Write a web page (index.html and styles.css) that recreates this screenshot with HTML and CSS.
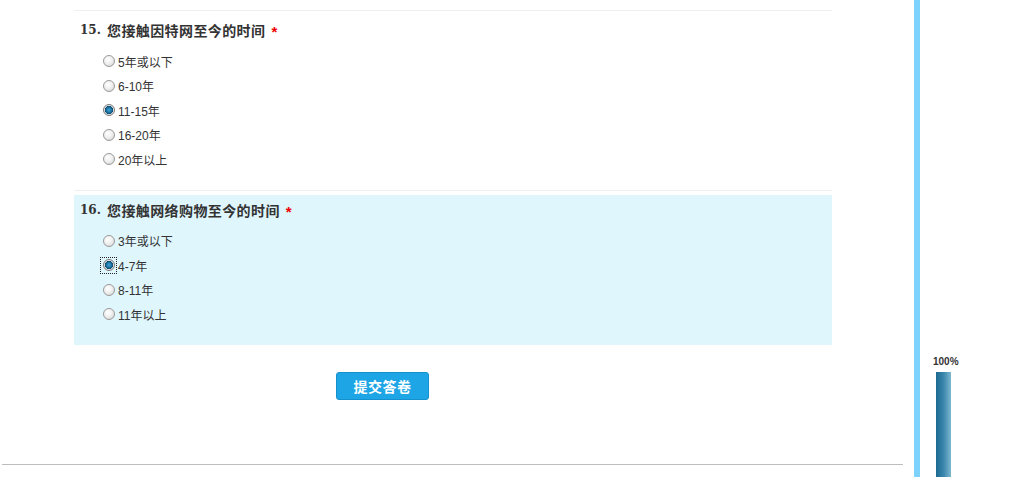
FILE: index.html
```html
<!DOCTYPE html>
<html lang="zh-CN">
<head>
<meta charset="utf-8">
<title>问卷</title>
<link rel="stylesheet" href="styles.css">
</head>
<body>
<div class="page">
  <div class="main">
    <div class="survey">
      <div class="prev-end"></div>
      <div class="question">
        <div class="q-title"><span class="q-num">15.</span><span class="q-text">您接触因特网至今的时间</span><span class="req">*</span></div>
        <ul class="options">
          <li><label><span class="radio-wrap"><input type="radio" name="q15" class="radio"></span><span>5年或以下</span></label></li>
          <li><label><span class="radio-wrap"><input type="radio" name="q15" class="radio"></span><span>6-10年</span></label></li>
          <li><label><span class="radio-wrap"><input type="radio" name="q15" class="radio" checked></span><span>11-15年</span></label></li>
          <li><label><span class="radio-wrap"><input type="radio" name="q15" class="radio"></span><span>16-20年</span></label></li>
          <li><label><span class="radio-wrap"><input type="radio" name="q15" class="radio"></span><span>20年以上</span></label></li>
        </ul>
      </div>
      <div class="question active">
        <div class="q-title"><span class="q-num">16.</span><span class="q-text">您接触网络购物至今的时间</span><span class="req">*</span></div>
        <ul class="options">
          <li><label><span class="radio-wrap"><input type="radio" name="q16" class="radio"></span><span>3年或以下</span></label></li>
          <li><label><span class="radio-wrap focused"><input type="radio" name="q16" class="radio" checked></span><span>4-7年</span></label></li>
          <li><label><span class="radio-wrap"><input type="radio" name="q16" class="radio"></span><span>8-11年</span></label></li>
          <li><label><span class="radio-wrap"><input type="radio" name="q16" class="radio"></span><span>11年以上</span></label></li>
        </ul>
      </div>
    </div>
    <div class="submit-row">
      <button class="submit" type="button">提交答卷</button>
    </div>
    <div class="footer-line"></div>
  </div>
  <div class="side">
    <div class="side-bar"></div>
    <div class="progress">
      <div class="progress-label">100%</div>
      <div class="progress-fill"></div>
    </div>
  </div>
</div>
</body>
</html>
```
FILE: styles.css
```css
html, body {
  margin: 0;
  padding: 0;
  background: #fff;
  height: 100%;
  overflow: hidden;
}
body {
  font-family: "Liberation Sans", "Noto Sans CJK SC", sans-serif;
  color: #333;
}
.page {
  display: flex;
  height: 477px;
}
.main {
  width: 904px;
  display: flex;
  flex-direction: column;
}
.survey {
  margin-left: 74px;
  width: 758px;
}
.prev-end {
  height: 10px;
  border-bottom: 1px solid #efefef;
  margin-bottom: 4px;
}
.question {
  padding: 5px 6px 18px 6px;
  border-bottom: 1px solid #efefef;
  margin-bottom: 4px;
}
.question.active {
  background: #dff6fd;
  border-bottom: 0;
}
.q-title {
  height: 20px;
  line-height: 20px;
  font-weight: bold;
  font-size: 14px;
  color: #333;
  display: flex;
  align-items: center;
}
.q-num {
  font-family: "DejaVu Serif", "Liberation Serif", serif;
  font-size: 12px;
  width: 27px;
}
.q-text {
  font-family: "Noto Sans CJK SC", sans-serif;
  font-size: 14px;
  letter-spacing: 0.4px;
}
.req {
  color: #e00;
  margin-left: 6px;
  font-size: 15px;
  font-family: "Liberation Sans", sans-serif;
  position: relative;
  top: 2px;
}
.options {
  list-style: none;
  margin: 9px 0 0 0;
  padding: 0 0 0 22px;
}
.options li {
  height: 24.5px;
  display: flex;
  align-items: center;
}
.options label {
  display: flex;
  align-items: center;
  font-size: 12px;
  color: #333;
}
.radio-wrap {
  display: flex;
  align-items: center;
  justify-content: center;
  width: 17px;
  height: 17px;
  margin: 0 1px 0 -2px;
  box-sizing: border-box;
  border: 1px solid transparent;
}
.radio-wrap.focused {
  border: 1px dotted #222;
}
.radio {
  appearance: none;
  -webkit-appearance: none;
  width: 12px;
  height: 12px;
  margin: 0;
  border-radius: 50%;
  border: 1px solid #9a9a9a;
  box-sizing: border-box;
  background: radial-gradient(circle at 40% 35%, #ffffff 0%, #f0f0f0 45%, #cfcfcf 100%);
}
.radio:checked {
  background: radial-gradient(circle at 50% 50%, #3fa8d8 0%, #1a6b9a 40%, #0d4a70 55%, #e9e9e9 62%, #cfcfcf 100%);
  border-color: #7a7a7a;
}
.submit-row {
  padding-left: 336px;
  margin-top: 23px;
}
.submit {
  width: 93px;
  height: 28px;
  border: 1px solid #1590cf;
  border-radius: 3px;
  background: #1ea5e6;
  color: #fff;
  font-family: "Noto Sans CJK SC", sans-serif;
  font-weight: bold;
  font-size: 14px;
  padding: 0;
  letter-spacing: 0.5px;
}
.footer-line {
  margin-top: 64px;
  margin-left: 2px;
  width: 901px;
  height: 1px;
  background: #bdbdbd;
}
.side {
  display: flex;
  margin-left: 10px;
}
.side-bar {
  width: 6px;
  background: #7dd3fe;
  height: 100%;
}
.progress {
  margin-left: 13px;
  padding-top: 357px;
  display: flex;
  flex-direction: column;
  align-items: flex-start;
  width: 30px;
}
.progress-label {
  font-size: 10px;
  font-weight: bold;
  font-family: "Liberation Sans", sans-serif;
  color: #333;
  height: 10px;
  line-height: 10px;
}
.progress-fill {
  margin-top: 5px;
  margin-left: 3px;
  width: 15px;
  flex: 1;
  background: linear-gradient(to right, #1c6a92 0%, #3a86ac 50%, #7db8d0 100%);
}
```
